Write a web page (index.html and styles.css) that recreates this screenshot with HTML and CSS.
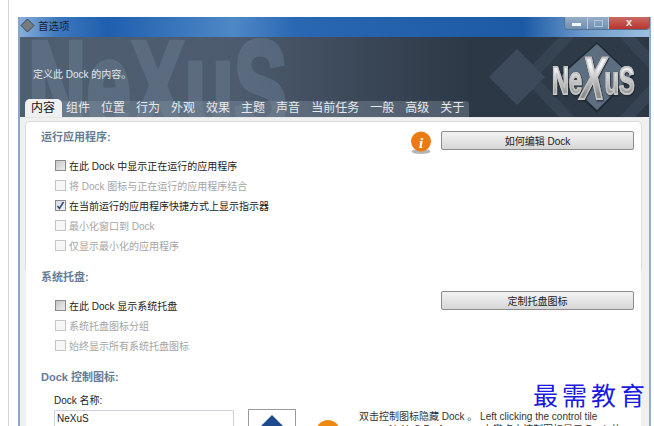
FILE: index.html
```html
<!DOCTYPE html>
<html lang="zh">
<head>
  <meta charset="UTF-8" />
  <title>首选项</title>
  <link rel="stylesheet" href="styles.css">
</head>
<body>

<div class="page">
  <div class="window">
    <div class="titlebar">
      <svg class="app-icon" width="15" height="15" viewBox="0 0 15 15"><path d="M7.5 1 L14 7.5 L7.5 14 L1 7.5 Z" fill="#777c82" stroke="#3d4248"/></svg>
      <span class="title-text">首选项</span>
      <div class="win-buttons">
        <div class="win-btn min"><span class="min-bar"></span></div>
        <div class="win-btn max"><span class="max-box"></span></div>
        <div class="win-btn close">x</div>
      </div>
    </div>

    <div class="client">
      <div class="banner">
        <div class="ghost-logo">NeXuS</div>
        <svg class="banner-art" width="211" height="80" viewBox="-2 0 211 80">
          <path d="M157 -40 L233 40 L157 120 L81 40 Z" fill="#364352"/>
          <path d="M157 -24 L217 40 L157 104 L97 40 Z" fill="#2e3a48"/>
          <path d="M77 12 L105 40 L77 68 L49 40 Z" fill="#3c4a5c"/>
          <path d="M157 5 L193 39 L157 76 L118 39 Z" fill="#1f2a36"/>
          <path d="M157 7 L191 39 L157 73 L121 39 Z" fill="#5d6e80"/>
        </svg>
        <div class="logo"><span>Ne</span><span class="logo-x">X</span><span>uS</span></div>
        <p class="banner-text">定义此 Dock 的内容。</p>
        <div class="tabs">
          <span class="tab active">内容</span>
          <span class="tab">组件</span>
          <span class="tab">位置</span>
          <span class="tab">行为</span>
          <span class="tab">外观</span>
          <span class="tab">效果</span>
          <span class="tab">主题</span>
          <span class="tab">声音</span>
          <span class="tab">当前任务</span>
          <span class="tab">一般</span>
          <span class="tab">高级</span>
          <span class="tab">关于</span>
        </div>
      </div>

      <div class="panel">
        <div class="section section-run">
          <div class="section-main">
            <h2>运行应用程序:</h2>
            <label class="check"><span class="box"></span>在此 Dock 中显示正在运行的应用程序</label>
            <label class="check off"><span class="box"></span>将 Dock 图标与正在运行的应用程序结合</label>
            <label class="check"><span class="box on">
              <svg width="9" height="9" viewBox="0 0 9 9"><path d="M1.5 5 L3.5 7.5 L7.5 1" fill="none" stroke="#33457a" stroke-width="1.5"/></svg>
            </span>在当前运行的应用程序快捷方式上显示指示器</label>
            <label class="check off"><span class="box"></span>最小化窗口到 Dock</label>
            <label class="check off"><span class="box"></span>仅显示最小化的应用程序</label>
          </div>
          <div class="section-side">
            <svg class="info" width="22" height="23" viewBox="0 0 22 23">
              <ellipse cx="11" cy="20.5" rx="9.5" ry="2.5" fill="#b5b5b5"/>
              <circle cx="11" cy="10.5" r="10" fill="#ec7a14"/>
              <text x="11" y="16.5" text-anchor="middle" class="info-i">i</text>
            </svg>
            <button class="btn">如何编辑 Dock</button>
          </div>
        </div>

        <div class="section section-tray">
          <div class="section-main">
            <h2>系统托盘:</h2>
            <label class="check"><span class="box"></span>在此 Dock 显示系统托盘</label>
            <label class="check off"><span class="box"></span>系统托盘图标分组</label>
            <label class="check off"><span class="box"></span>始终显示所有系统托盘图标</label>
          </div>
          <div class="section-side tray-side">
            <button class="btn">定制托盘图标</button>
          </div>
        </div>

        <div class="section section-dock">
          <h2>Dock 控制图标:</h2>
          <div class="dock-row">
            <div class="name-col">
              <div class="field-label">Dock 名称:</div>
              <div class="input">NeXuS</div>
            </div>
            <div class="icon-well">
              <svg width="34" height="34" viewBox="0 0 34 34"><path d="M17 1 L33 17 L17 33 L1 17 Z" fill="#1f4a8c"/></svg>
            </div>
            <div class="round-info"></div>
            <p class="dock-note">双击控制图标隐藏 Dock 。 Left clicking the control tile opens NeXuS Preferences. 右键点击控制图标显示 Dock 的</p>
          </div>
        </div>
      </div>
    </div>
  </div>
</div>

<div class="watermark">最需教育</div>

</body>
</html>
```

FILE: styles.css
```css
html, body {
  margin: 0;
  padding: 0;
  height: 426px;
  overflow: hidden;
  background: #fff;
}
body {
  font-family: "Liberation Sans", "Noto Sans CJK SC", sans-serif;
  font-size: 10px;
  color: #222;
  position: relative;
}
.page {
  margin-left: 8px;
  height: 426px;
  box-sizing: border-box;
  border-left: 1px solid #d4d4d4;
  padding: 17px 0 0 9px;
  overflow: hidden;
}

.window {
  width: 633px;
  height: 409px;
  background: linear-gradient(90deg, #86aedb 0, #3d78bd 6%, #1f5fae 14%, #4f88c6 34%, #2a67b2 44%, #1c5aa6 80%, #6f9ccc 90%, #9dbddd 100%);
  border-left: 2px solid #8ba6c4;
  border-right: 2px solid #8fb0d2;
  box-sizing: border-box;
}
.titlebar {
  height: 19px;
  box-sizing: border-box;
  padding-bottom: 3px;
  display: flex;
  align-items: center;
  position: relative;
}
.title-text {
  font-size: 10.5px;
  color: #1a2430;
  margin-left: 3px;
}
.win-buttons {
  position: absolute;
  right: -1px;
  top: 0;
  display: flex;
  height: 12px;
  border: 1px solid #54718f;
  border-top: 0;
  border-radius: 0 0 4px 4px;
  overflow: hidden;
}
.win-btn {
  display: flex;
  align-items: center;
  justify-content: center;
  height: 12px;
}
.min, .max {
  background: linear-gradient(#96adc6, #6f8fb2);
  border-right: 1px solid #b8cbe0;
}
.min {
  width: 22px;
}
.max {
  width: 20px;
}
.min-bar {
  width: 9px;
  height: 3px;
  background: #f4f6f8;
  margin-top: 3px;
}
.max-box {
  width: 7px;
  height: 5px;
  border: 1px solid #b3c6db;
}
.close {
  width: 40px;
  background: linear-gradient(#c96a62, #b8352e);
  color: #f2eeee;
  font-weight: bold;
  font-size: 11px;
  line-height: 8px;
  padding-bottom: 3px;
  box-sizing: border-box;
}

.client {
  margin-top: 1px;
  background: #f0f0f0;
}
.banner {
  height: 80px;
  position: relative;
  overflow: hidden;
  background: linear-gradient(90deg, #4f5f72 0, #4c5b6e 35%, #3a4757 55%, #2d3846 72%, #2d3846 100%);
}
.ghost-logo {
  position: absolute;
  left: 8px;
  top: -15px;
  font: bold 132px/132px "Liberation Sans", sans-serif;
  color: #6f8299;
  -webkit-text-stroke: 5px #6f8299;
  opacity: .42;
  transform: scaleX(.61);
  transform-origin: left top;
}
.banner-art {
  position: absolute;
  right: 0;
  top: 0;
}
.logo {
  position: absolute;
  left: 532px;
  top: 7px;
  display: flex;
  align-items: baseline;
  font: bold 39px/60px "Liberation Sans", sans-serif;
  transform: scaleX(.6);
  transform-origin: left top;
  filter: drop-shadow(1px 1px 1px #1c232c);
  -webkit-text-stroke: 2px #c4c4c4;
}
.logo span {
  background: linear-gradient(#f2f2f2 30%, #8c8c8c 75%);
  -webkit-background-clip: text;
  background-clip: text;
  color: transparent;
}
.logo .logo-x {
  font-size: 60px;
  transform: translateY(5px) skewX(-14deg);
  margin: 0 -1px;
}
.banner-text {
  position: absolute;
  left: 13px;
  top: 29px;
  margin: 0;
  color: #e4e8ee;
  font-size: 10px;
}
.tabs {
  position: absolute;
  left: 5px;
  bottom: 0;
  display: flex;
  height: 16px;
  background: rgba(130, 145, 160, .4);
  border-radius: 4px 4px 0 0;
}
.tab {
  font-size: 12px;
  color: #e6eaee;
  line-height: 15px;
  padding: 0 5px 0 6px;
}
.tab.active {
  background: #f0f0f0;
  color: #111;
  height: 18px;
  margin-top: -2px;
  line-height: 19px;
  border-radius: 5px 5px 0 0;
  padding: 0 7px 0 6px;
  margin-right: -2px;
}

.panel {
  border-top: 1px solid #e6e6e6;
  margin: 0 7px 0 5px;
  padding: 3px 1px 0 1px;
  height: 320px;
  background: #f0f0f0;
}
.section {
  background: #fff;
}
.section-run {
  display: flex;
  justify-content: space-between;
  height: 140px;
  padding-top: 8px;
  border-radius: 5px 5px 0 0;
  border: 1px solid #dcdcdc;
  border-bottom: 0;
  margin: 0 -1px;
}
.section-tray {
  display: flex;
  justify-content: space-between;
  height: 100px;
}
.section-main {
  padding-left: 15px;
}
.section-side {
  display: flex;
  align-items: flex-start;
  gap: 9px;
  padding: 1px 7px 0 0;
}
.tray-side {
  padding-top: 21px;
}
h2 {
  margin: 0 0 11px;
  font-size: 11px;
  line-height: 14px;
  font-weight: bold;
  color: #667d97;
}
.check {
  display: flex;
  align-items: center;
  height: 20px;
  margin-left: 14px;
  color: #222;
  font-size: 10px;
}
.check.off {
  color: #a5a5a5;
}
.box {
  width: 9px;
  height: 9px;
  border: 1px solid #8a8a8a;
  background: linear-gradient(135deg, #c4c4c4, #efefef);
  margin-right: 3px;
  display: flex;
  align-items: center;
  justify-content: center;
}
.off .box {
  border-color: #c5c5c5;
  background: #f6f6f6;
}
.box.on {
  background: linear-gradient(135deg, #d6dbe4, #f4f4f4);
}
.info-i {
  font: italic bold 15px "Liberation Serif", serif;
  fill: #fff;
}
.btn {
  width: 193px;
  height: 19px;
  padding: 0;
  font-family: inherit;
  font-size: 10px;
  color: #222;
  border: 1px solid #8c8c8c;
  border-radius: 2px;
  background: linear-gradient(#f3f3f3, #d6d6d6);
}
.section-dock {
  padding-left: 15px;
  height: 70px;
}
.section-dock h2 {
  margin-bottom: 8px;
}
.dock-row {
  display: flex;
  align-items: flex-start;
  margin-left: 13px;
}
.field-label {
  font-size: 10px;
  color: #222;
  margin-bottom: 3px;
}
.input {
  width: 176px;
  height: 16px;
  border: 1px solid #ccd2d9;
  font-size: 10px;
  line-height: 16px;
  padding-left: 2px;
}
.icon-well {
  width: 46px;
  height: 50px;
  border: 1px solid #9a9a9a;
  margin: 17px 0 0 14px;
  display: flex;
  justify-content: center;
  padding-top: 4px;
  flex: none;
}
.round-info {
  width: 24px;
  height: 24px;
  border-radius: 50%;
  background: #ee8a12;
  margin: 28px 0 0 20px;
  flex: none;
}
.dock-note {
  margin: 19px 0 0 19px;
  width: 268px;
  flex: none;
  font-size: 10px;
  line-height: 12.5px;
  color: #333;
}

.watermark {
  position: absolute;
  left: 533px;
  top: 379px;
  font: 25px/30px "Noto Sans CJK SC", serif;
  color: #1a1ae0;
  letter-spacing: 4px;
  white-space: nowrap;
}
```
